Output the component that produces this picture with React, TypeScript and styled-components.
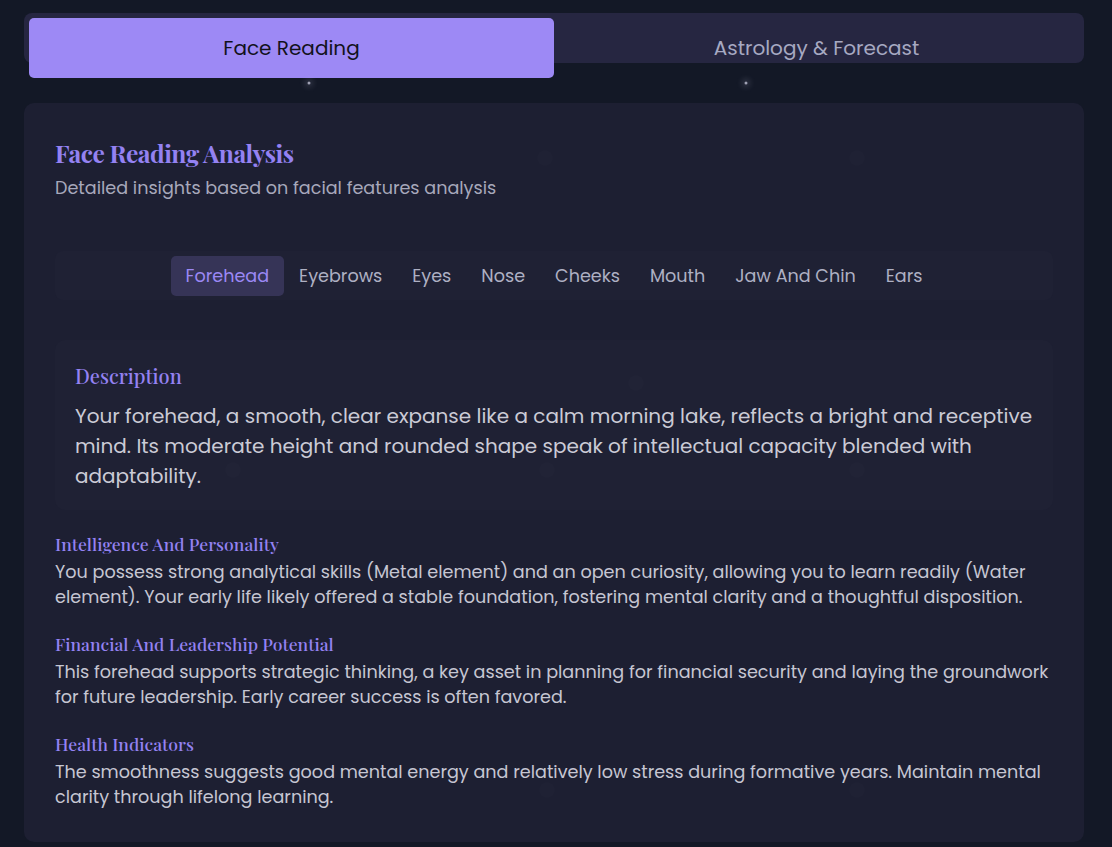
import React, { FC, useState } from 'react';
import styled, { createGlobalStyle } from 'styled-components';

const GlobalStyle = createGlobalStyle`
  body {
    margin: 0;
    background: #131826;
    font-family: Poppins, "Open Sans", "DejaVu Sans", sans-serif;
  }
`;

const Page = styled.div`
  padding: 13px 28px 6px 24px;
  min-height: 847px;
  box-sizing: border-box;
  position: relative;
`;

const TabBar = styled.div`
  display: grid;
  grid-template-columns: 1fr 1fr;
  height: 50px;
  padding: 5px;
  box-sizing: border-box;
  background: #262641;
  border-radius: 8px;
`;

const MainTab = styled.button<{ $active?: boolean }>`
  height: 60px;
  border: none;
  border-radius: 5px;
  background: ${p => (p.$active ? '#9d89f5' : 'transparent')};
  color: ${p => (p.$active ? '#12121c' : '#a6a9c2')};
  font-family: inherit;
  font-size: 20px;
  cursor: pointer;
`;

const Star = styled.span<{ $x: number; $y: number; $size?: number; $alpha?: number }>`
  position: absolute;
  left: ${p => p.$x}px;
  top: ${p => p.$y}px;
  width: ${p => p.$size ?? 3}px;
  height: ${p => p.$size ?? 3}px;
  border-radius: 50%;
  background: rgba(220, 220, 240, ${p => p.$alpha ?? 0.7});
  box-shadow: 0 0 6px 2px rgba(200, 200, 230, ${p => (p.$alpha ?? 0.7) * 0.35});
  transform: translate(-50%, -50%);
  pointer-events: none;
`;

const Card = styled.section`
  margin-top: 40px;
  padding: 30px 31px 32px;
  background: #1d1f32;
  border-radius: 10px;
  position: relative;
`;

const Title = styled.h1`
  margin: 0;
  font-family: "Playfair Display", "Liberation Serif", serif;
  font-weight: 700;
  font-size: 24.5px;
  line-height: 39px;
  letter-spacing: -0.5px;
  color: #9482f2;
`;

const Subtitle = styled.p`
  margin: 4px 0 0;
  font-size: 17.6px;
  line-height: 24px;
  color: #a7a8bb;
`;

const FeatureBar = styled.div`
  margin-top: 51px;
  height: 49px;
  display: flex;
  justify-content: center;
  align-items: center;
  background: #1f2134;
  border-radius: 8px;
`;

const FeatureTab = styled.button<{ $active?: boolean }>`
  height: 40px;
  padding: 0 15px;
  border: none;
  border-radius: 5px;
  background: ${p => (p.$active ? '#363457' : 'transparent')};
  color: ${p => (p.$active ? '#9b88f4' : '#aeb0c3')};
  font-family: inherit;
  font-size: 17.6px;
  cursor: pointer;
`;

const DescBox = styled.div`
  margin-top: 40px;
  padding: 22px 16px 19px 20px;
  background: #1f2134;
  border-radius: 10px;
`;

const DescHeading = styled.h3`
  margin: 0;
  font-family: "Playfair Display", "Liberation Serif", serif;
  font-weight: 500;
  font-size: 20px;
  line-height: 28px;
  color: #9482f2;
`;

const DescText = styled.p`
  margin: 11px 0 0;
  font-size: 20px;
  line-height: 30px;
  color: #cbcbd6;
`;

const SectionList = styled.div`
  margin-top: 22px;
  display: flex;
  flex-direction: column;
  gap: 22px;
`;

const SectionHeading = styled.h4`
  margin: 0;
  font-family: "Playfair Display", "Liberation Serif", serif;
  font-weight: 500;
  font-size: 17.6px;
  line-height: 24px;
  color: #9482f2;
`;

const SectionText = styled.p`
  margin: 4px 0 0;
  font-size: 17.6px;
  line-height: 25px;
  color: #c6c6d2;
`;

const features = ['Forehead', 'Eyebrows', 'Eyes', 'Nose', 'Cheeks', 'Mouth', 'Jaw And Chin', 'Ears'];

const sections = [
  {
    title: 'Intelligence And Personality',
    text: 'You possess strong analytical skills (Metal element) and an open curiosity, allowing you to learn readily (Water element). Your early life likely offered a stable foundation, fostering mental clarity and a thoughtful disposition.',
  },
  {
    title: 'Financial And Leadership Potential',
    text: 'This forehead supports strategic thinking, a key asset in planning for financial security and laying the groundwork for future leadership. Early career success is often favored.',
  },
  {
    title: 'Health Indicators',
    text: 'The smoothness suggests good mental energy and relatively low stress during formative years. Maintain mental clarity through lifelong learning.',
  },
];

const cardStars: [number, number][] = [
  [521, 55], [833, 55], [612, 280], [209, 367], [523, 367], [833, 367], [523, 687], [833, 687],
];

const App: FC = () => {
  const [mainTab, setMainTab] = useState(0);
  const [feature, setFeature] = useState('Forehead');

  return (
    <>
      <GlobalStyle />
      <Page>
        <TabBar>
          <MainTab $active={mainTab === 0} onClick={() => setMainTab(0)}>Face Reading</MainTab>
          <MainTab $active={mainTab === 1} onClick={() => setMainTab(1)}>Astrology &amp; Forecast</MainTab>
        </TabBar>
        <Star $x={309} $y={83} />
        <Star $x={746} $y={83} />

        <Card>
          {cardStars.map(([x, y], i) => (
            <Star key={i} $x={x} $y={y} $size={16} $alpha={0.012} />
          ))}
          <Title>Face Reading Analysis</Title>
          <Subtitle>Detailed insights based on facial features analysis</Subtitle>

          <FeatureBar>
            {features.map(f => (
              <FeatureTab key={f} $active={feature === f} onClick={() => setFeature(f)}>
                {f}
              </FeatureTab>
            ))}
          </FeatureBar>

          <DescBox>
            <DescHeading>Description</DescHeading>
            <DescText>
              Your forehead, a smooth, clear expanse like a calm morning lake, reflects a bright and receptive
              mind. Its moderate height and rounded shape speak of intellectual capacity blended with
              adaptability.
            </DescText>
          </DescBox>

          <SectionList>
            {sections.map(s => (
              <div key={s.title}>
                <SectionHeading>{s.title}</SectionHeading>
                <SectionText>{s.text}</SectionText>
              </div>
            ))}
          </SectionList>
        </Card>
      </Page>
    </>
  );
};

export default App;
